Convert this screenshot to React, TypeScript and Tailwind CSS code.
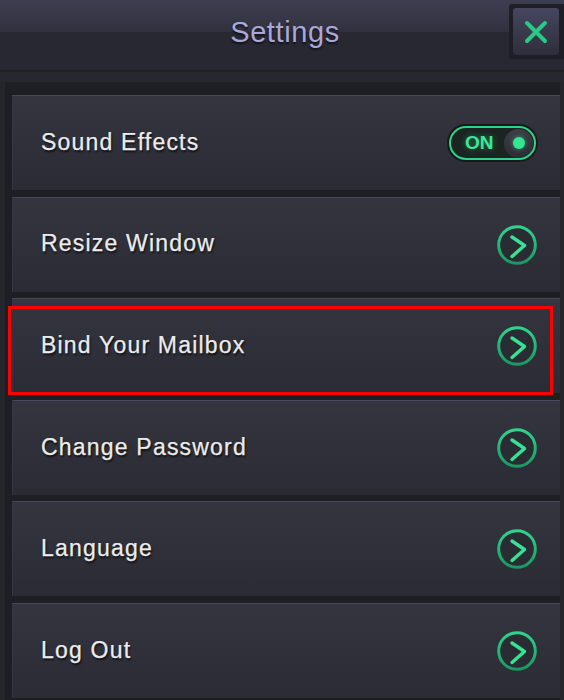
const items = ['Resize Window', 'Bind Your Mailbox', 'Change Password', 'Language', 'Log Out'];

function ChevronCircle() {
  return (
    <svg width="40" height="40" viewBox="0 0 40 40" fill="none">
      <defs>
        <linearGradient id="ring" x1="0" y1="0" x2="0" y2="1">
          <stop offset="0%" stopColor="#2fd48c" />
          <stop offset="100%" stopColor="#1b9863" />
        </linearGradient>
      </defs>
      <circle cx="20" cy="20" r="18.3" stroke="url(#ring)" strokeWidth="3" fill="#2a2c33" />
      <path d="M15 12 L27.5 20.5 L15 31.5" stroke="#36e394" strokeWidth="3.4" strokeLinecap="round" strokeLinejoin="round" />
    </svg>
  );
}

function Toggle() {
  return (
    <div className="w-[91px] h-[38px] rounded-full bg-[#17181c] p-[2px]">
      <div className="w-full h-full rounded-full border-2 border-[#2bd487] bg-[#1b2421] flex items-center justify-between pl-[14px] pr-[1px]">
        <span className="text-[19px] font-bold text-[#3ae897] [font-family:'Liberation_Sans',sans-serif] [text-shadow:0_0_6px_rgba(58,232,151,0.45)]">ON</span>
        <div className="w-[29px] h-[29px] rounded-full bg-gradient-to-b from-[#3d3e48] to-[#2b2c34] flex items-center justify-center">
          <div className="w-[12px] h-[12px] rounded-full bg-[#34e592] shadow-[0_0_5px_rgba(52,229,146,0.6)]" />
        </div>
      </div>
    </div>
  );
}

function Card({ label, children }: { label: string; children: React.ReactNode }) {
  return (
    <div className="h-[95px] flex items-center justify-between pl-[28px] pr-[22px] bg-gradient-to-b from-[#34353f] to-[#2a2b33] border-t border-[#46475a] border-l border-l-[#35363f]">
      <span className="-mt-[2px] text-[23px] tracking-[1.2px] text-[#ececec] [-webkit-text-stroke:0.25px_#ececec] [font-family:'Liberation_Sans',sans-serif] [text-shadow:1px_2px_2px_rgba(0,0,0,0.7)]">
        {label}
      </span>
      {children}
    </div>
  );
}

export default function App() {
  return (
    <div className="w-[564px] h-[700px] overflow-hidden bg-[#25262c] flex flex-col">
      {/* Header */}
      <div className="relative h-[70px] shrink-0 flex flex-col">
        <div className="h-[32px] bg-gradient-to-b from-[#3e3e52] to-[#31313e]" />
        <div className="flex-1 bg-[#282832]" />
        <div className="absolute inset-0 flex items-center justify-center">
          <span className="text-[29px] tracking-[0.6px] text-[#aaa8d8] [font-family:'Liberation_Sans',sans-serif] [text-shadow:0_2px_2px_rgba(0,0,0,0.6)] -mt-[4px] ml-[6px]">
            Settings
          </span>
        </div>
        <div className="absolute left-[509px] top-[4px] w-[60px] h-[55px] rounded-[3px] bg-[#1e1e26] p-[4px]">
          <div className="w-[46px] h-[47px] rounded-[3px] bg-gradient-to-b from-[#464660] to-[#2e2e3a] flex items-center justify-center">
            <svg width="24" height="24" viewBox="0 0 24 24" fill="none">
              <path d="M3 3 L21 21 M21 3 L3 21" stroke="#27c985" strokeWidth="4" strokeLinecap="round" />
            </svg>
          </div>
        </div>
      </div>
      <div className="h-[2px] bg-[#1f1f26] shrink-0" />
      <div className="h-[10px] bg-[#27282f] shrink-0" />

      {/* Panel */}
      <div className="flex-1 ml-[5px] mr-[4px] bg-[#1e1f24] pt-[13px] pl-[7px] flex flex-col gap-[6.6px]">
        <Card label="Sound Effects">
          <Toggle />
        </Card>
        {items.map((label) => (
          <div key={label} className="relative">
            <Card label={label}>
              <div className="pr-[1px]">
                <ChevronCircle />
              </div>
            </Card>
            {label === 'Bind Your Mailbox' && (
              <div className="absolute left-[-4px] top-[8px] w-[545px] h-[89px] border-[3px] border-[#ff0000] pointer-events-none" />
            )}
          </div>
        ))}
      </div>
    </div>
  );
}
